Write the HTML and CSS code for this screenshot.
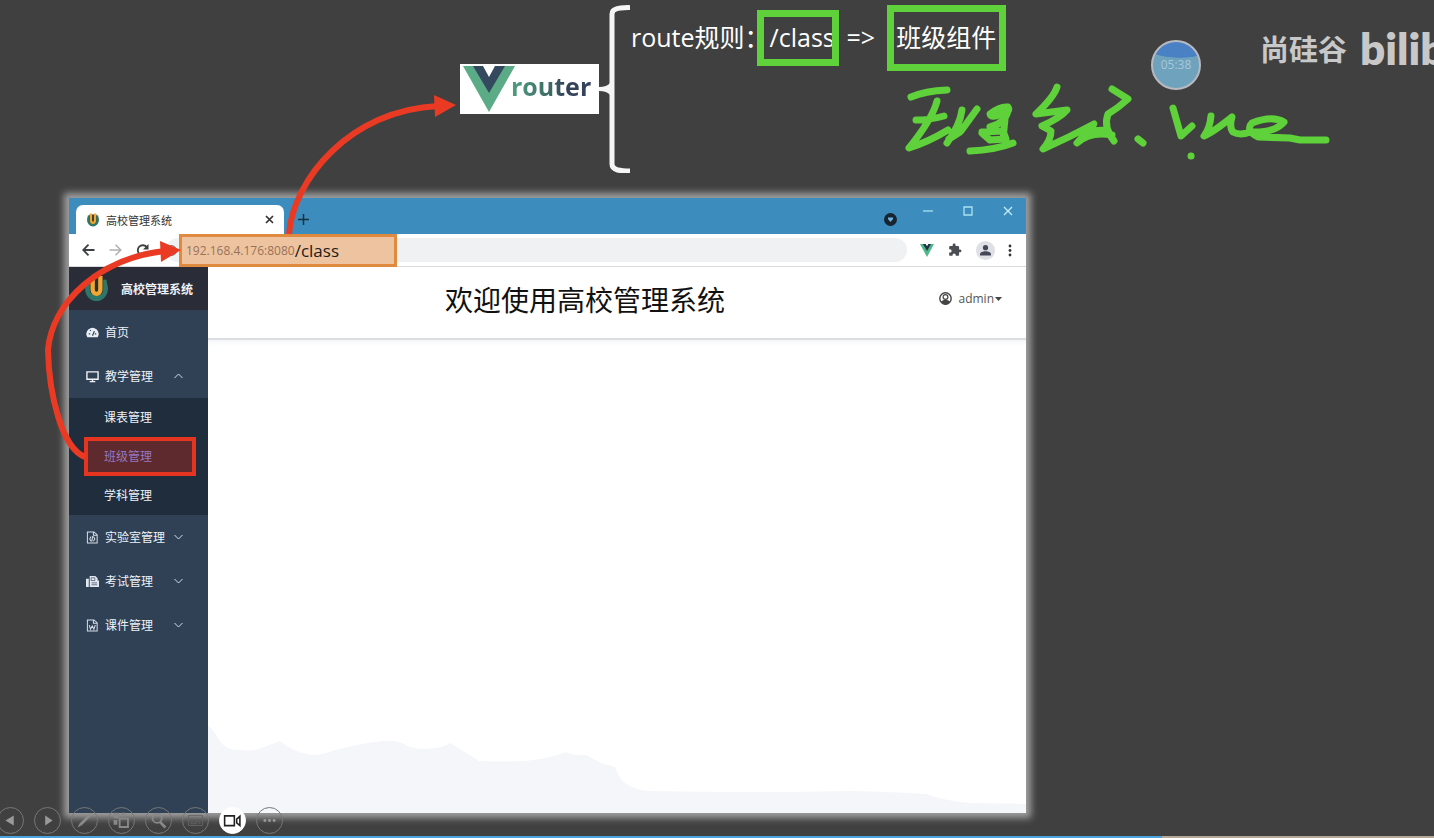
FILE: index.html
```html
<!DOCTYPE html>
<html lang="zh-CN">
<head>
<meta charset="utf-8">
<title>高校管理系统</title>
<link rel="stylesheet" href="styles.css">
</head>
<body>
<main class="slide">
  <section class="rules">
    <div class="router-logo">
      <svg class="vue-big" viewBox="0 0 52 46" aria-hidden="true"><path fill="#5aab86" d="M0 0h52L26 46z"/><path fill="#35495e" d="M10 0h32L26 27z"/><path fill="#fff" d="M20 0h12l-6 11z"/></svg>
      <span class="router-word">router</span>
    </div>
    <svg class="brace" viewBox="0 0 31 168" aria-hidden="true"><path fill="none" stroke="#f5f5f5" stroke-width="5" d="M31 2.500C20 3 13 3 13 9V159C13 165 20 166 31 166"/><path fill="#f5f5f5" d="M0 82q8 0 11-4v12q-3-4-11-4z"/></svg>
    <p class="rule">
      <span>route规则：</span>
      <span class="mark mark-path">/class</span>
      <span class="becomes">=&gt;</span>
      <span class="mark mark-part">班级组件</span>
    </p>
  </section>

  <section class="browser">
    <header class="titlebar">
      <div class="tab">
        <svg class="favicon" viewBox="0 0 28 28" aria-hidden="true"><use href="#crest"/></svg>
        <span class="tab-title">高校管理系统</span>
        <button class="bare" aria-label="关闭标签页"><svg width="9" height="9" viewBox="0 0 9 9"><path d="M1 1l7 7M8 1l-7 7" stroke="#333" stroke-width="1.700"/></svg></button>
      </div>
      <button class="bare new-tab" aria-label="新标签页"><svg width="11" height="11" viewBox="0 0 11 11"><path d="M5.500 0v11M0 5.500h11" stroke="#17313f" stroke-width="1.500"/></svg></button>
      <div class="window-buttons">
        <button class="bare tab-search" aria-label="搜索标签页"><svg width="13" height="13" viewBox="0 0 13 13"><circle cx="6.500" cy="6.500" r="6.500" fill="#182530"/><path d="M4 4.500h5v1.500L6.500 9 4 6z" fill="#6fb4e0"/></svg></button>
        <button class="bare" aria-label="最小化"><svg width="10" height="10" viewBox="0 0 10 10"><path d="M0 5h10" stroke="#a9e2f3" stroke-width="1.300"/></svg></button>
        <button class="bare" aria-label="最大化"><svg width="10" height="10" viewBox="0 0 10 10"><path d="M1 1h8v8H1z" fill="none" stroke="#a9e2f3" stroke-width="1.300"/></svg></button>
        <button class="bare" aria-label="关闭"><svg width="10" height="10" viewBox="0 0 10 10"><path d="M1 1l8 8M9 1L1 9" stroke="#c5eefa" stroke-width="1.300"/></svg></button>
      </div>
    </header>

    <div class="toolbar">
      <button class="bare" aria-label="后退"><svg width="13" height="12" viewBox="0 0 13 12"><path d="M12.500 6H1M6.500 .7L1.200 6l5.300 5.300" fill="none" stroke="#3c3f43" stroke-width="1.800"/></svg></button>
      <button class="bare" aria-label="前进"><svg width="13" height="12" viewBox="0 0 13 12"><path d="M.5 6H12M6.500 .7L11.800 6l-5.300 5.300" fill="none" stroke="#aeb0b3" stroke-width="1.500"/></svg></button>
      <button class="bare" aria-label="刷新"><svg width="13" height="13" viewBox="0 0 13 13"><path d="M11 3.500A5 5 0 1 0 11.500 8" fill="none" stroke="#3c3f43" stroke-width="1.800"/><path d="M12.500 0v5.500H7z" fill="#3c3f43"/></svg></button>
      <div class="address">
        <svg width="11" height="11" viewBox="0 0 11 11" aria-hidden="true"><circle cx="5.500" cy="5.500" r="4.800" fill="none" stroke="#777" stroke-width="1.200"/><path d="M5.500 5v3M5.500 2.700v1.200" stroke="#777" stroke-width="1.200"/></svg>
        <div class="url"><span class="host">192.168.4.176:8080</span><span class="path">/class</span></div>
      </div>
      <svg width="14" height="13" viewBox="0 0 14 13" aria-hidden="true"><path fill="#4fb788" d="M0 0h14L7 13z"/><path fill="#23324a" d="M3 0h8L7 7z"/><path fill="#fff" d="M5.700 0h2.600L7 2.200z"/></svg>
      <button class="bare" aria-label="扩展程序"><svg width="14" height="14" viewBox="0 0 24 24"><path fill="#4a4d52" d="M20.500 11H19V7a2 2 0 0 0-2-2h-4V3.500a2.500 2.500 0 0 0-5 0V5H4a2 2 0 0 0-2 2v3.800h1.500a2.700 2.700 0 0 1 0 5.400H2V20a2 2 0 0 0 2 2h3.800v-1.500a2.700 2.700 0 0 1 5.400 0V22H17a2 2 0 0 0 2-2v-4h1.500a2.500 2.500 0 0 0 0-5z"/></svg></button>
      <button class="bare" aria-label="用户"><svg width="19" height="19" viewBox="0 0 19 19"><circle cx="9.500" cy="9.500" r="9.500" fill="#dfe0e6"/><circle cx="9.500" cy="6.700" r="2.600" fill="#45475a"/><path d="M4 14.500v-1.200c0-4 11-4 11 0v1.200z" fill="#45475a"/></svg></button>
      <button class="bare dots" aria-label="菜单"><svg width="4" height="13" viewBox="0 0 4 13"><g fill="#333"><circle cx="2" cy="2" r="1.400"/><circle cx="2" cy="6.500" r="1.400"/><circle cx="2" cy="11" r="1.400"/></g></svg></button>
    </div>

    <div class="app">
      <aside class="sidebar">
        <div class="brand"><svg class="crest" viewBox="0 0 28 28" aria-hidden="true"><g id="crest"><path d="M5 5C-2 16 5 27 14 27S30 16 23 5" fill="#2f7768"/><path d="M7 3v12c0 10 14 10 14 0V3z" fill="#26303a"/><path d="M5 5v9c0 12 18 12 18 0V5" fill="none" stroke="#2f7768" stroke-width="3"/><path d="M10 1v14c0 6 8 6 8 0V1" fill="none" stroke="#f1a832" stroke-width="4.500"/></g></svg><strong>高校管理系统</strong></div>
        <nav class="menu">
          <a class="item" href="#home"><svg viewBox="0 0 14 14"><path d="M1.500 12A6.500 6.500 0 1 1 12.500 12z" fill="#e9eef5"/><path d="M7 10.500l2-5M3 8.500h1.500M4.500 4.500l.8.800M9.500 8.500H11" stroke="#304156" stroke-width="1.300"/></svg><span>首页</span></a>
          <a class="item" href="#teach"><svg viewBox="0 0 14 14"><path d="M1 2h12v8H1zM4 12.500h6M7 10v2" fill="none" stroke="#f2f3f7" stroke-width="1.500"/></svg><span>教学管理</span><svg class="chev" viewBox="0 0 9 6"><path d="M.5 5l4-4 4 4" fill="none" stroke="#d5dce5"/></svg></a>
          <div class="submenu">
            <a href="#timetable">课表管理</a>
            <a class="active" href="#class">班级管理</a>
            <a href="#subject">学科管理</a>
          </div>
          <a class="item" href="#lab"><svg viewBox="0 0 14 14"><path d="M1.500 1h7l3.500 3v9H1.500zM8 1v3.500h4M5.500 6L4 8.500 5.500 11M8 6l1.500 2.500L8 11M7.200 5.500l-1 6" fill="none" stroke="#d5dce5" stroke-width="1.100"/></svg><span>实验室管理</span><svg class="chev" viewBox="0 0 9 6"><path d="M.5 1l4 4 4-4" fill="none" stroke="#d5dce5"/></svg></a>
          <a class="item" href="#exam"><svg viewBox="0 0 14 14"><path d="M0 4h3v9H0zM4 1h6l2.500 2.500V6H14v7H4z" fill="#e2e8f0"/><path d="M5.500 3h4v3h-4zM6 8.500h6M6 10.500h6" fill="none" stroke="#405066" stroke-width=".8"/></svg><span>考试管理</span><svg class="chev" viewBox="0 0 9 6"><path d="M.5 1l4 4 4-4" fill="none" stroke="#d5dce5"/></svg></a>
          <a class="item" href="#courseware"><svg viewBox="0 0 14 14"><path d="M1.500 1h7l3.500 3v9H1.500zM8 1v3.500h4M3.500 6.500l1.300 4.500L6.700 7.500 8.500 11l1.500-4.500" fill="none" stroke="#d5dce5" stroke-width="1.100"/></svg><span>课件管理</span><svg class="chev" viewBox="0 0 9 6"><path d="M.5 1l4 4 4-4" fill="none" stroke="#d5dce5"/></svg></a>
        </nav>
      </aside>
      <div class="content">
        <header class="page-head">
          <h1>欢迎使用高校管理系统</h1>
          <button class="bare user"><svg width="13" height="13" viewBox="0 0 13 13" aria-hidden="true"><circle cx="6.500" cy="6.500" r="5.700" fill="none" stroke="#444" stroke-width="1.400"/><circle cx="6.500" cy="5" r="2.400" fill="none" stroke="#444" stroke-width="1.200"/><path d="M2 10c2-3 7-3 9 0l-4.500 3z" fill="#444"/></svg><span>admin</span><svg width="7" height="4" viewBox="0 0 7 4" aria-hidden="true"><path d="M0 0h7L3.500 4z" fill="#444"/></svg></button>
        </header>
        <div class="page-body">
          <svg class="terrain" viewBox="0 0 818 100" preserveAspectRatio="none" aria-hidden="true"><path fill="#f5f6f9" d="M0 12Q8 20 11 27 18 38 33 37 46 39 56 34L72 28Q84 38 98 41 109 44 124 38 150 31 168 29 182 26 194 30 203 36 217 36 236 35 242 30L271 48Q300 49 317 48 340 46 358 39 366 43 378 42 385 46 393 50L407 54Q410 64 417 70 426 77 442 78 540 80 642 78 690 79 718 81 742 89 762 90L818 91V100H0z"/></svg>
        </div>
      </div>
    </div>
  </section>

  <svg class="ink" width="1434" height="838" viewBox="0 0 1434 838" aria-hidden="true">
    <g fill="none" stroke="#eb3a24" stroke-width="6">
      <path d="M289 234C293 180 350 110 438 106"/>
      <path d="M85 457C62 448 49 395 48 350 52 302 100 258 165 251"/>
    </g>
    <path fill="#eb3a24" d="M434 95l22 10-21 12zM160 241l21 9-20 12z"/>
    <g fill="none" stroke="#5fd13a" stroke-width="7" stroke-linecap="round" stroke-linejoin="round">
      <path d="M911 97Q925 91 947 90M937 101Q933 118 909 148 928 142 948 130M916 120Q930 120 944 116M962 110Q960 125 947 143M961 131L977 109M960 132L949 139"/>
      <path fill="#5fd13a" d="M990 114Q1000 106 1008 107 1011 112 1000 115 991 118 990 114z"/>
      <path d="M1008 110Q1006 123 990 127M1005 119L1003 139M982 133L990 140 1006 139 1003 131 982 132M970 151Q995 150 1013 143"/>
      <path d="M1057 87Q1054 97 1036 114L1067 110Q1060 118 1042 126L1051 131Q1051 140 1043 149 1068 138 1094 124L1077 143Q1090 131 1112 135M1112 89L1128 99Q1118 108 1108 114 1103 127 1114 141M1090 131L1106 130M1138 139l5 4"/>
      <path d="M1173 108L1181 136 1192 126M1211 116Q1210 128 1204 136 1212 133 1232 117 1229 127 1233 132 1240 136 1250 132 1275 133 1284 122 1272 115 1252 123 1245 130 1258 137L1290 138 1300 140H1326M1191 156h.1"/>
    </g>
  </svg>

  <div class="timer">05:38</div>
  <div class="watermark"><span>尚硅谷</span><span class="site">bilib</span></div>

  <div class="show-controls">
    <button aria-label="上一张"><svg viewBox="0 0 27 27"><path d="M17 8v11l-9-5.500z" fill="#999"/></svg></button>
    <button aria-label="下一张"><svg viewBox="0 0 27 27"><path d="M11 8v11l8-5.500z" fill="#999"/></svg></button>
    <button aria-label="画笔"><svg viewBox="0 0 27 27"><path d="M9 18L20 7" stroke="#8b8b8b" stroke-width="3"/><path d="M6 21l2-4 2 2z" fill="#8b8b8b"/></svg></button>
    <button aria-label="全部幻灯片"><svg viewBox="0 0 27 27"><path d="M5 5h6v6H5zM13 5h5v4h-5zM5 13h4v5H5z" fill="#888"/><path d="M11.500 11.500h9v9h-9z" fill="none" stroke="#888" stroke-width="2"/></svg></button>
    <button aria-label="放大"><svg viewBox="0 0 27 27"><circle cx="12" cy="11" r="5" fill="none" stroke="#888" stroke-width="2"/><path d="M15 15l6 6" stroke="#888" stroke-width="3"/></svg></button>
    <button aria-label="字幕"><svg viewBox="0 0 27 27"><path d="M6 8h15v11H6zM8 15h3M12 15h7M8 17h7M17 17h2" fill="none" stroke="#666"/></svg></button>
    <button class="on" aria-label="摄像头"><svg viewBox="0 0 27 27"><path d="M5 8.500h10.500v10.500H5zM18 12l3.500-3v10L18 16z" fill="none" stroke="#222" stroke-width="1.700"/></svg></button>
    <button aria-label="更多"><svg viewBox="0 0 27 27"><g fill="#999"><circle cx="8.500" cy="13.500" r="1.600"/><circle cx="13.500" cy="13.500" r="1.600"/><circle cx="18.500" cy="13.500" r="1.600"/></g></svg></button>
  </div>
  <div class="progress"><div class="played"></div></div>
</main>
</body>
</html>
```
FILE: styles.css
```css
* { box-sizing: border-box; }
body {
  margin: 0;
  background: #404040;
  color: #fff;
  font-family: "Open Sans", "Noto Sans CJK SC", sans-serif;
}
a { color: inherit; text-decoration: none; }
svg { display: block; flex: none; }
.bare { display: flex; align-items: center; border: 0; padding: 0; background: none; font: inherit; color: inherit; }

.slide {
  position: relative;
  display: flex;
  flex-direction: column;
  min-height: 100vh;
  padding-bottom: 25px;
  overflow: hidden;
}

.rules { display: flex; align-items: center; padding: 5px 0 25px 460px; }
.router-logo { display: flex; align-items: flex-start; width: 139px; height: 50px; padding: 2px 3px; background: #fff; }
.vue-big { width: 52px; height: 46px; }
.router-word {
  margin-left: -4px;
  font: 700 25px/40px "Open Sans", sans-serif;
  background: linear-gradient(90deg, #4e9f80, #3c6360 55%, #35435a 65%);
  background-clip: text;
  color: transparent;
}
.brace { width: 31px; height: 168px; }
.rule { display: flex; align-self: flex-start; margin: 0; padding-left: 1px; font-size: 25px; line-height: 64px; white-space: nowrap; }
.mark { border: 7px solid #5fd13a; overflow: hidden; }
.mark-path { width: 82px; height: 56px; margin: 5px 0 0 -13px; padding-left: 6px; line-height: 40px; }
.becomes { margin: 0 12px 0 8px; }
.mark-part { width: 119px; height: 66px; padding-left: 2px; line-height: 50px; }

.browser {
  flex: 1;
  display: flex;
  flex-direction: column;
  margin: 0 408px 0 69px;
  background: #fff;
  color: #333;
  box-shadow: 0 0 7px 5px #a0a0a0;
}
.titlebar { display: flex; height: 36px; padding-left: 7px; background: #3c8cbe; }
.tab {
  display: flex;
  align-items: center;
  width: 208px;
  margin-top: 7px;
  padding: 0 10px;
  border-radius: 7px 7px 0 0;
  background: #fff;
  font-size: 11px;
}
.favicon { width: 14px; height: 14px; }
.tab-title { flex: 1; margin-left: 6px; }
.new-tab { margin: 7px 0 0 14px; }
.window-buttons { display: flex; align-items: center; gap: 30px; height: 25px; margin-left: auto; padding-right: 13px; }
.tab-search { align-self: flex-end; margin-bottom: -3px; margin-right: -4px; }

.toolbar {
  display: flex;
  align-items: center;
  gap: 14px;
  height: 33px;
  padding: 0 14px 0 13px;
  border-bottom: 1px solid #dadada;
}
.address { flex: 1; display: flex; align-items: center; gap: 2px; height: 24px; margin-left: 3px; margin-right: -1px; border-radius: 12px; background: #f0f1f3; }
.dots { margin-left: -1px; }
.url {
  display: flex;
  align-items: center;
  width: 218px;
  height: 33px;
  padding-left: 4px;
  border: 3px solid #e08a40;
  background: #eec4a0;
  white-space: nowrap;
}
.host { font-size: 12px; color: #997159; }
.path { font-size: 17px; color: #1f1a17; }

.app { flex: 1; display: flex; }
.sidebar { width: 139px; background: #304156; color: #eef2f7; font-size: 12px; }
.brand { display: flex; align-items: center; gap: 11px; height: 43px; padding-left: 14px; background: #2a2d38; }
.crest { width: 27px; height: 27px; }
.item { display: flex; align-items: center; gap: 6px; height: 44px; padding-left: 17px; padding-right: 25px; }
.item svg { width: 13px; height: 13px; }
.item .chev { width: 9px; height: 6px; margin-left: auto; }
.submenu { background: #1f2d3d; }
.submenu a { display: block; padding-left: 35px; line-height: 39px; }
.submenu .active {
  margin: 0 12px 0 15px;
  padding-left: 16px;
  border: 4px solid #e5341f;
  background: #5f2a2d;
  color: #9379c2;
  line-height: 31px;
}

.content { flex: 1; display: flex; flex-direction: column; }
.page-head { display: flex; align-items: center; height: 73px; padding: 0 24px 8px 237px; border-bottom: 2px solid #dcdde0; }
h1 { margin: 0; color: #111; font: 400 28px/40px "Noto Sans CJK SC", sans-serif; }
.user { gap: 6px; margin-left: auto; font-size: 12px; color: #555; }
.user svg:last-child { margin-left: -5px; }
.page-body { flex: 1; display: flex; align-items: flex-end; background: linear-gradient(#f5f7f9, #fff 6px); }
.terrain { width: 100%; height: 100px; }

.ink { position: absolute; top: 0; left: 0; pointer-events: none; }
.timer {
  position: absolute;
  top: 40px;
  right: 233px;
  width: 50px;
  height: 50px;
  border: 2px solid #b9b9c0;
  border-radius: 50%;
  background: radial-gradient(ellipse 40px 16px at 58% 0, #4a81c4 96%, #6fa3bd 100%);
  color: #a9c6d8;
  font-size: 12px;
  line-height: 46px;
  text-align: center;
}
.watermark {
  position: absolute;
  top: 18px;
  left: 1260px;
  right: 0;
  display: flex;
  align-items: center;
  gap: 13px;
  height: 60px;
  overflow: hidden;
  color: #c8c8c8;
  font: 700 29px/60px "Noto Sans CJK SC", sans-serif;
  white-space: nowrap;
}
.site { font: 800 44px/60px Lato, sans-serif; }

.show-controls { position: absolute; left: -3px; bottom: 4px; display: flex; gap: 10px; }
.show-controls button { width: 27px; height: 27px; border: 1px solid #777; border-radius: 50%; padding: 0; background: none; }
.show-controls svg { width: 25px; height: 25px; }
.show-controls .on { background: #fff; border-color: #fff; }
.progress { position: absolute; left: 0; right: 0; bottom: 0; height: 2px; background: #b5a99a; }
.played { width: 81%; height: 2px; background: #4aa5df; }
```
